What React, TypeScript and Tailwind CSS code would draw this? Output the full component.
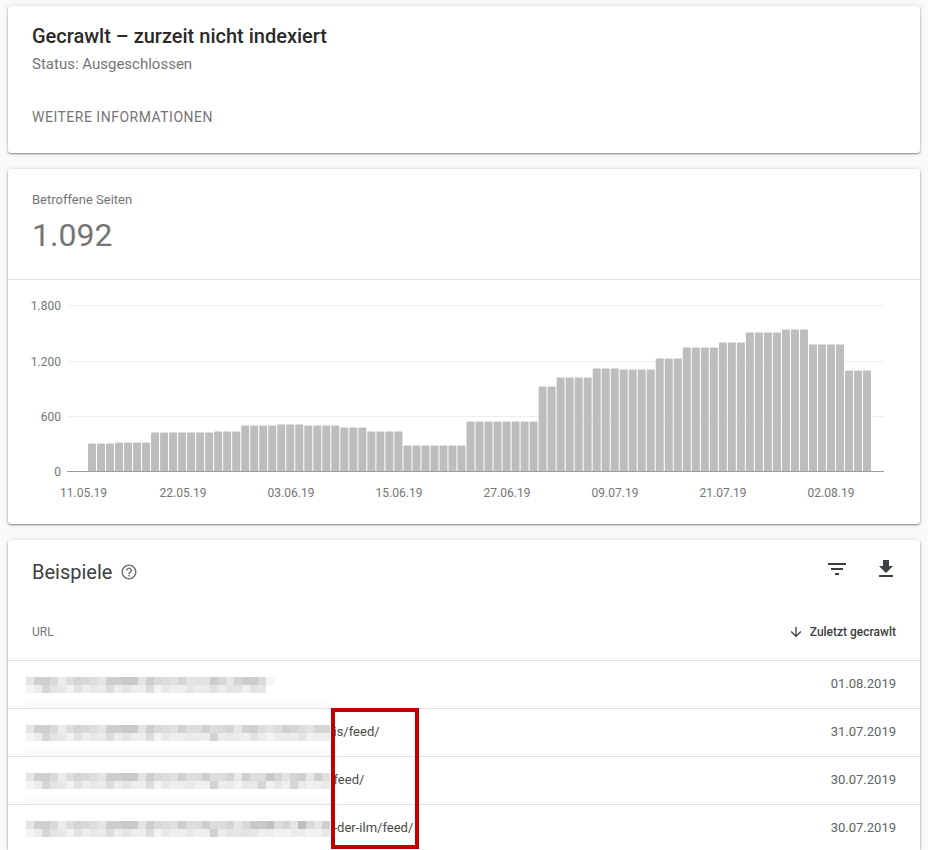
import React from 'react';
import { MdHelpOutline, MdFilterList, MdFileDownload, MdArrowDownward } from 'react-icons/md';

// [bar count, height in px]
const barGroups: [number, number][] = [
  [3, 28], [4, 29], [7, 39], [3, 40], [4, 46], [3, 47], [4, 46], [3, 44], [4, 40], [7, 26], [8, 50],
  [2, 85], [4, 94], [3, 103], [4, 102], [3, 113], [4, 124], [3, 129], [4, 139], [3, 142], [4, 127], [3, 101],
];
const bars = barGroups.flatMap(([count, h]) => Array.from({ length: count }, () => h));

const yTicks = [
  { label: '1.800', y: 25.5 },
  { label: '1.200', y: 81.5 },
  { label: '600', y: 136.5 },
  { label: '0', y: 191.5 },
];

const xTicks = [
  { label: '11.05.19', x: 75.5 },
  { label: '22.05.19', x: 175 },
  { label: '03.06.19', x: 283 },
  { label: '15.06.19', x: 391 },
  { label: '27.06.19', x: 499 },
  { label: '09.07.19', x: 607 },
  { label: '21.07.19', x: 715 },
  { label: '02.08.19', x: 823 },
];

const Chart = () => (
  <svg width="912" height="244" className="block" style={{ fontFamily: 'Roboto, sans-serif' }}>
    {yTicks.slice(0, 3).map((t) => (
      <line key={t.label} x1="59" x2="876" y1={t.y} y2={t.y} stroke="#eeeeee" />
    ))}
    {yTicks.map((t) => (
      <text key={t.label} x="53" y={t.y + 4.5} textAnchor="end" fontSize="12" fill="#757575">
        {t.label}
      </text>
    ))}
    {bars.map((h, i) => (
      <path
        key={i}
        d={`M${80 + i * 9.012} 191.5v${-h + 1}q0 -1 1 -1h6q1 0 1 1v${h - 1}z`}
        fill="#bdbdbd"
      />
    ))}
    <line x1="59" x2="876" y1="191.5" y2="191.5" stroke="#9e9e9e" />
    {xTicks.map((t) => (
      <text key={t.label} x={t.x} y="217" textAnchor="middle" fontSize="12" fill="#757575">
        {t.label}
      </text>
    ))}
  </svg>
);

const shared = {
  top: 'e4 cf cf d9 ec dd d5 d9 dd e6 ce ce c9 c9 e3 ce d9 dd e0',
  bottom: 'f4 ec d6 e4 e8 f2 e2 ee e8 eb dc ed e6 ed ed dd f2 e9 ee',
};

const rows = [
  {
    top: 'd5 e3 e3 e3 cc d5 e6 d5 cc cc d9 f6',
    bottom: 'ee e6 ec ea e2 ec e4 e4 f0 e2 e6',
    width: 248,
    tail: '',
    date: '01.08.2019',
  },
  {
    top: 'd0 dd dd d2 dd d9 d5 e6 d2 cf dd e3 dd d0 d5 dc e2 d5 d5',
    bottom: 'ee ea ec ec d2 ec e8 ec f0 e3 ec f4 ec ea ec e3 f2 ee ee',
    width: 304,
    tail: 'is/feed/',
    date: '31.07.2019',
  },
  {
    top: 'cf dd dd cf dd dd d5 ea cf dd dd c9 d5 e3 d5 cf e6 d0 e0',
    bottom: 'ee ea f0 f0 d2 ec ea f2 e8 e8 d5 f0 e6 ee d5 ea f0 ee ea',
    width: 304,
    tail: 'feed/',
    date: '30.07.2019',
  },
  {
    top: 'ce dd dd cf dd dd d5 e6 d9 c9 c9 c0 dd d5 e3 bf d9 e6 d0',
    bottom: 'ee e8 ee ee d0 ec e6 e6 e2 e6 ee ec f2 f2 ec ec f2 f2 e8',
    width: 304,
    tail: '-der-ilm/feed/',
    date: '30.07.2019',
  },
];

// the pixelated part of the url
const Pixelated = ({ top, bottom, width }: { top: string; bottom: string; width: number }) => {
  const lines = [`${shared.top} ${top}`, `${shared.bottom} ${bottom}`];
  return (
    <svg width={width} height="16" className="block shrink-0 self-start mt-4" shapeRendering="crispEdges">
      {lines.map((line, y) =>
        line.split(' ').map((c, x) => (
          <rect key={`${y}-${x}`} x={x * 8} y={y * 8} width="8" height="8" fill={`#${c}${c}${c}`} />
        )),
      )}
    </svg>
  );
};

const cardClass =
  'bg-white rounded-[3px] shadow-[0_1px_2px_rgba(0,0,0,0.45),0_0_5px_rgba(0,0,0,0.1)]';

export default function App() {
  return (
    <div className="h-[850px] overflow-hidden bg-[#fafafa] px-2 pt-[6px] flex flex-col gap-4 font-['Roboto',sans-serif]">
      <div className={`${cardClass} h-[147px] shrink-0 px-6 pt-[17px]`}>
        <h1 className="text-[20px] leading-[26px] font-medium text-[#2a2a2a]">Gecrawlt – zurzeit nicht indexiert</h1>
        <p className="mt-[5px] text-[15px] leading-[20px] text-[#757575]">Status: Ausgeschlossen</p>
        <button className="block mt-[33px] text-[14px] leading-[20px] tracking-[0.5px] text-[#757575]">
          WEITERE INFORMATIONEN
        </button>
      </div>

      <div className={`${cardClass} h-[355px] shrink-0`}>
        <div className="h-[111px] border-b border-[#e0e0e0] px-6 pt-[23px]">
          <div className="text-[13px] leading-[16px] text-[#757575]">Betroffene Seiten</div>
          <div className="mt-[7px] text-[32px] leading-[40px] text-[#757575]">1.092</div>
        </div>
        <Chart />
      </div>

      <div className={`${cardClass} shrink-0`}>
        <div className="h-[60px] px-6 flex items-start justify-between">
          <div className="flex items-center gap-[8px] pt-[19px]">
            <h2 className="text-[20px] leading-[26px] text-[#3c4043]">Beispiele</h2>
            <MdHelpOutline size={18} className="text-[#757575]" />
          </div>
          <div className="flex items-center gap-[25px] pt-[17px] mr-[-2px]">
            <MdFilterList size={24} className="text-[#3c4043]" />
            <MdFileDownload size={24} className="text-[#3c4043]" />
          </div>
        </div>
        <div className="h-[60px] px-6 flex items-center justify-between pt-[4px]">
          <span className="text-[12px] text-[#757575]">URL</span>
          <span className="flex items-center gap-[6px] text-[12px] font-medium text-[#3c4043]">
            <MdArrowDownward size={16} />
            Zuletzt gecrawlt
          </span>
        </div>
        <div className="relative">
          {rows.map((row, i) => (
            <div key={i} className="relative h-12 border-t border-[#e0e0e0] flex items-center pl-[18px] pr-6 pb-[2px]">
              <Pixelated top={row.top} bottom={row.bottom} width={row.width} />
              {row.tail && <span className="ml-[3.5px] text-[13px] text-[#4a4a4a]">{row.tail}</span>}
              <span className="ml-auto text-[13px] text-[#5f6368]">{row.date}</span>
              {i < 3 && <div className="absolute left-[18px] top-[40px] w-[305px] h-2 bg-[#fafafa]" />}
            </div>
          ))}
          <div className="absolute left-[323px] top-[48px] w-[88px] h-[141px] border-4 border-[#c00000]" />
        </div>
      </div>
    </div>
  );
}
